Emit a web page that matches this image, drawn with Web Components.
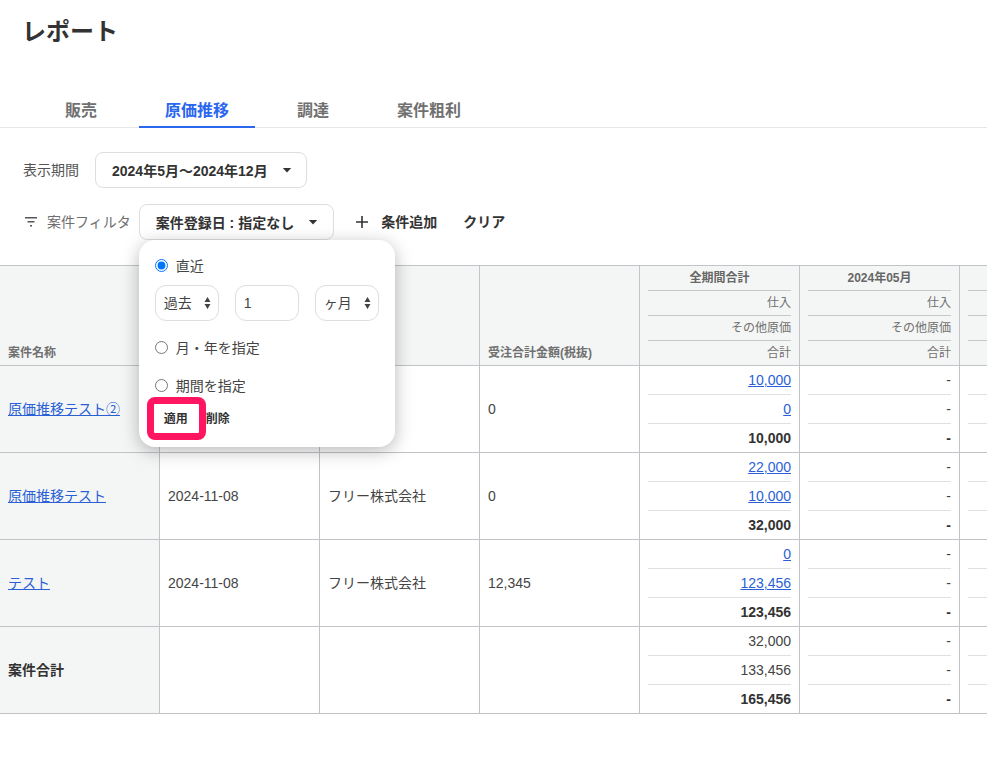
<!DOCTYPE html>
<html lang="ja">

<head>
    <meta charset="utf-8">
    <title>レポート</title>
    <style>
        html, body {
            margin: 0;
            background: #fff;
            color: #333;
            font-family: "Liberation Sans", "Noto Sans CJK JP", sans-serif;
        }
    </style>
</head>

<body>
    <report-page>
        <report-tabs>
            <tab-item>販売</tab-item>
            <tab-item active>原価推移</tab-item>
            <tab-item>調達</tab-item>
            <tab-item>案件粗利</tab-item>
        </report-tabs>
        <filter-bar></filter-bar>
        <report-table></report-table>
    </report-page>

    <script type="text/javascript">
        const CARET = '<svg width="10" height="5" viewBox="0 0 10 5"><path d="M.8 0h8.4L5 4.6z" fill="#333"/></svg>';

        // shorthand: every element below is just a template in an open shadow root
        function define(name, html, setup) {
            const tmpl = document.createElement('template');
            tmpl.innerHTML = html;
            customElements.define(name, class extends HTMLElement {
                constructor() {
                    super();
                    this.attachShadow({ mode: 'open' }).appendChild(tmpl.content.cloneNode(true));
                }
                connectedCallback() {
                    if (setup) setup(this);
                }
            });
        }

        define('report-page', `<style>
                :host { display: block; width: 100%; overflow: hidden; }
                h1 { margin: 0; height: 92px; padding: 16px 0 0 22px; box-sizing: border-box; font-size: 24px; line-height: 32px; font-weight: 700; color: #333; }
            </style>
            <h1>レポート</h1>
            <slot></slot>`);

        define('report-tabs', `<style>
                :host { display: flex; gap: 16px; height: 36px; box-sizing: border-box; padding-left: 39px; border-bottom: 1px solid #e4e6e8; }
            </style>
            <slot></slot>`);

        define('tab-item', `<style>
                :host { display: block; height: 36px; padding: 0 26px; box-sizing: border-box; font-size: 16px; line-height: 38px; font-weight: 700; color: #707070; }
                :host([active]) { color: #2a66ee; border-bottom: 2px solid #2a66ee; }
            </style>
            <slot></slot>`);

        define('pill-button', `<style>
                :host { display: inline-flex; align-items: center; height: 36px; box-sizing: border-box; padding: 0 14px 0 16px; gap: 14px; border: 1px solid #dcdee0; border-radius: 8px; background: #fff; font-size: 14px; font-weight: 700; color: #333; white-space: nowrap; }
            </style>
            <slot></slot>${CARET}`);

        define('filter-bar', `<style>
                :host { display: block; padding: 24px 0 25px 23px; font-size: 14px; color: #555; }
                .row { display: flex; align-items: center; height: 36px; }
                .row + .row { margin-top: 16px; }
                .period { margin-left: 16px; }
                .cond { padding-right: 15px; }
                .icon { margin: 0 10px 0 2px; display: block; }
                .anchor { position: relative; margin-left: 8px; }
                .muted { color: #6e6e6e; }
                .action { font-weight: 700; color: #333; font-size: 14px; }
                .plus { display: block; margin: 0 13px 0 22px; }
                .clear { margin-left: 26px; }
                span { padding-bottom: 2px; }
            </style>
            <div class="row">
                <span>表示期間</span>
                <pill-button class="period">2024年5月～2024年12月</pill-button>
            </div>
            <div class="row">
                <svg class="icon" width="12" height="10" viewBox="0 0 12 10"><path d="M0 .75h12M2.5 4.75h7M5 8.75h2" stroke="#555" stroke-width="1.4" fill="none"/></svg>
                <span class="muted">案件フィルタ</span>
                <div class="anchor">
                    <pill-button class="cond">案件登録日 : 指定なし</pill-button>
                    <date-popover></date-popover>
                </div>
                <svg class="plus" width="12" height="12" viewBox="0 0 12 12"><path d="M6 0v12M0 6h12" stroke="#333" stroke-width="1.6" fill="none"/></svg>
                <span class="action">条件追加</span>
                <span class="action clear">クリア</span>
            </div>`);

        define('spin-select', `<style>
                :host { display: flex; align-items: center; justify-content: space-between; width: 64px; height: 36px; box-sizing: border-box; padding: 0 7px 3px 8px; border: 1px solid #dcdee0; border-radius: 11px; font-size: 14px; color: #444; }
                svg { display: block; margin-top: 2px; }
            </style>
            <slot></slot>
            <svg width="7" height="12" viewBox="0 0 7 12"><path d="M3.5 0L6.5 5H.5zM3.5 12L.5 7h6z" fill="#444"/></svg>`);

        define('date-popover', `<style>
                :host { position: absolute; left: 0; top: 36px; z-index: 5; width: 256px; height: 207px; box-sizing: border-box; padding: 16px 16px 0; background: #fff; border-radius: 16px; box-shadow: 0 4px 18px rgba(0,0,0,.28); font-size: 14px; color: #444; }
                label { display: flex; align-items: center; height: 18px; gap: 8px; }
                input[type=radio] { margin: 0; width: 13px; height: 13px; accent-color: #0075ff; }
                .fields { display: flex; gap: 16px; margin: 11px 0 17px; }
                .num { width: 64px; height: 36px; box-sizing: border-box; padding: 0 8px; border: 1px solid #dcdee0; border-radius: 11px; line-height: 34px; }
                .last { margin-top: 20px; }
                .buttons { display: flex; margin-top: 7px; font-size: 12px; font-weight: 700; color: #333; }
                .buttons span { height: 36px; line-height: 36px; padding: 0 9px; }
                .mark { position: absolute; left: 8px; top: 157px; width: 59px; height: 43px; box-sizing: border-box; border: 7px solid #ff1560; border-radius: 8px; }
            </style>
            <label><input type="radio" name="range" checked>直近</label>
            <div class="fields">
                <spin-select>過去</spin-select>
                <div class="num">1</div>
                <spin-select>ヶ月</spin-select>
            </div>
            <label><input type="radio" name="range">月・年を指定</label>
            <label class="last"><input type="radio" name="range">期間を指定</label>
            <div class="buttons"><span>適用</span><span>削除</span></div>
            <div class="mark"></div>`);

        // three stacked amounts inside a month column
        define('amount-stack', `<style>
                :host { display: block; padding: 0 8px; font-size: 14px; text-align: right; color: #444; }
                div { height: 28px; line-height: 29px; border-bottom: 1px solid #e0e0e0; }
                div:last-child { border-bottom: 0; font-weight: 700; color: #333; }
                a { color: #2a5fd6; text-decoration: underline; }
            </style>
            <div id="a"></div><div id="b"></div><div id="c"></div>`, el => {
            for (const k of ['a', 'b', 'c']) {
                const v = el.getAttribute(k) || '';
                const box = el.shadowRoot.getElementById(k);
                box.innerHTML = el.hasAttribute('links') && k !== 'c' ? '<a href="#">' + v + '</a>' : v;
            }
        });

        define('month-head', `<style>
                :host { display: block; padding: 0 8px; font-size: 12px; text-align: right; color: #707070; }
                div { height: 24px; line-height: 24px; border-bottom: 1px solid #c4c8cc; }
                #t { text-align: center; font-weight: 700; color: #666; }
                div:last-child { border-bottom: 0; }
            </style>
            <div id="t"></div><div>仕入</div><div>その他原価</div><div>合計</div>`, el => {
            el.shadowRoot.getElementById('t').textContent = el.getAttribute('title-text') || '';
            if (el.hasAttribute('blank')) {
                el.shadowRoot.querySelectorAll('div').forEach(d => d.textContent = '');
            }
        });

        const ROWS = [
            { name: '原価推移テスト②', link: true, date: '', client: '', order: '0', total: ['10,000', '0', '10,000'] },
            { name: '原価推移テスト', link: true, date: '2024-11-08', client: 'フリー株式会社', order: '0', total: ['22,000', '10,000', '32,000'] },
            { name: 'テスト', link: true, date: '2024-11-08', client: 'フリー株式会社', order: '12,345', total: ['0', '123,456', '123,456'] },
            { name: '案件合計', link: false, date: '', client: '', order: '', total: ['32,000', '133,456', '165,456'] }
        ];

        define('report-table', `<style>
                :host { display: block; overflow: hidden; border-top: 1px solid #c0c4c8; }
                .grid { display: grid; width: 1120px; grid-template-columns: repeat(7, 160px); grid-template-rows: 100px repeat(4, 87px); font-size: 14px; color: #444; }
                .cell { box-sizing: border-box; border-right: 1px solid #c0c4c8; border-bottom: 1px solid #c0c4c8; min-width: 0; }
                .head { background: #f4f6f5; }
                .label { display: flex; align-items: flex-end; padding: 0 8px 4px; font-size: 12px; line-height: 16px; font-weight: 700; color: #707070; }
                .text { display: flex; align-items: center; padding: 0 8px; }
                .name { background: #f4f6f5; padding-bottom: 3px; }
                .client { padding-bottom: 2px; }
                .sum { font-weight: 700; color: #333; }
                a { color: #2a5fd6; }
            </style>
            <div class="grid" id="grid"></div>`, el => {
            const grid = el.shadowRoot.getElementById('grid');
            let html = '<div class="cell head label">案件名称</div><div class="cell head"></div><div class="cell head"></div>'
                + '<div class="cell head label">受注合計金額(税抜)</div>'
                + '<div class="cell head"><month-head title-text="全期間合計"></month-head></div>'
                + '<div class="cell head"><month-head title-text="2024年05月"></month-head></div>'
                + '<div class="cell head"><month-head blank></month-head></div>';
            for (const r of ROWS) {
                const name = r.link ? '<a href="#">' + r.name + '</a>' : '<span class="sum">' + r.name + '</span>';
                const links = r.link ? ' links' : '';
                html += '<div class="cell text name">' + name + '</div>'
                    + '<div class="cell text">' + r.date + '</div>'
                    + '<div class="cell text client">' + r.client + '</div>'
                    + '<div class="cell text">' + r.order + '</div>'
                    + '<div class="cell"><amount-stack' + links + ' a="' + r.total[0] + '" b="' + r.total[1] + '" c="' + r.total[2] + '"></amount-stack></div>'
                    + '<div class="cell"><amount-stack a="-" b="-" c="-"></amount-stack></div>'
                    + '<div class="cell"><amount-stack></amount-stack></div>';
            }
            grid.innerHTML = html;
        });
    </script>
</body>

</html>
